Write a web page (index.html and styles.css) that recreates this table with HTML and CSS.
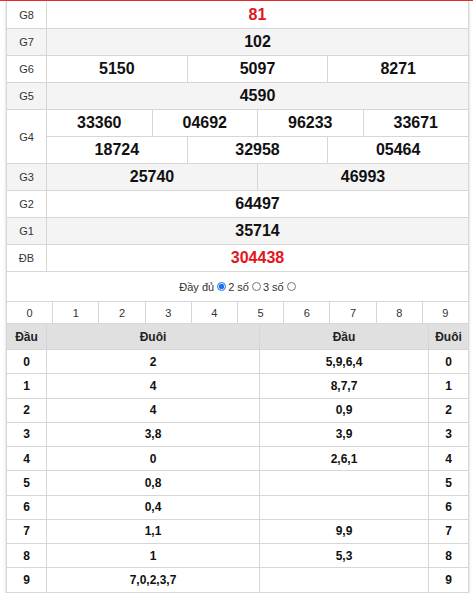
FILE: index.html
```html
<!DOCTYPE html>
<html lang="vi">
<head>
<meta charset="utf-8">
<link rel="stylesheet" href="styles.css">
</head>
<body>
<div class="topline"></div>
<div class="box">
  <div class="row"><div class="lbl">G8</div><div class="vals"><div class="v red">81</div></div></div>
  <div class="row alt"><div class="lbl">G7</div><div class="vals"><div class="v">102</div></div></div>
  <div class="row"><div class="lbl">G6</div><div class="vals"><div class="v">5150</div><div class="v">5097</div><div class="v">8271</div></div></div>
  <div class="row alt"><div class="lbl">G5</div><div class="vals"><div class="v">4590</div></div></div>
  <div class="row g4"><div class="lbl">G4</div>
    <div class="vals stack">
      <div class="sub"><div class="v">33360</div><div class="v">04692</div><div class="v">96233</div><div class="v">33671</div></div>
      <div class="sub"><div class="v">18724</div><div class="v">32958</div><div class="v">05464</div></div>
    </div>
  </div>
  <div class="row alt"><div class="lbl">G3</div><div class="vals"><div class="v">25740</div><div class="v">46993</div></div></div>
  <div class="row"><div class="lbl">G2</div><div class="vals"><div class="v">64497</div></div></div>
  <div class="row alt"><div class="lbl">G1</div><div class="vals"><div class="v">35714</div></div></div>
  <div class="row"><div class="lbl">ĐB</div><div class="vals"><div class="v red">304438</div></div></div>

  <div class="opts">
    <span>Đầy đủ</span><input type="radio" name="m" class="rd" checked><span>2 số</span><input type="radio" name="m" class="rd"><span>3 số</span><input type="radio" name="m" class="rd">
  </div>

  <div class="digits">
    <div class="d">0</div><div class="d">1</div><div class="d">2</div><div class="d">3</div><div class="d">4</div>
    <div class="d">5</div><div class="d">6</div><div class="d">7</div><div class="d">8</div><div class="d">9</div>
  </div>

  <div class="lt head"><div class="c1">Đầu</div><div class="c2">Đuôi</div><div class="c3">Đầu</div><div class="c4">Đuôi</div></div>
  <div class="lt"><div class="c1">0</div><div class="c2">2</div><div class="c3">5,9,6,4</div><div class="c4">0</div></div>
  <div class="lt"><div class="c1">1</div><div class="c2">4</div><div class="c3">8,7,7</div><div class="c4">1</div></div>
  <div class="lt"><div class="c1">2</div><div class="c2">4</div><div class="c3">0,9</div><div class="c4">2</div></div>
  <div class="lt"><div class="c1">3</div><div class="c2">3,8</div><div class="c3">3,9</div><div class="c4">3</div></div>
  <div class="lt"><div class="c1">4</div><div class="c2">0</div><div class="c3">2,6,1</div><div class="c4">4</div></div>
  <div class="lt"><div class="c1">5</div><div class="c2">0,8</div><div class="c3"></div><div class="c4">5</div></div>
  <div class="lt"><div class="c1">6</div><div class="c2">0,4</div><div class="c3"></div><div class="c4">6</div></div>
  <div class="lt"><div class="c1">7</div><div class="c2">1,1</div><div class="c3">9,9</div><div class="c4">7</div></div>
  <div class="lt"><div class="c1">8</div><div class="c2">1</div><div class="c3">5,3</div><div class="c4">8</div></div>
  <div class="lt last"><div class="c1">9</div><div class="c2">7,0,2,3,7</div><div class="c3"></div><div class="c4">9</div></div>
</div>
</body>
</html>
```
FILE: styles.css
```css
* { box-sizing: border-box; }
html, body { margin: 0; padding: 0; background: #fff; }
body { font-family: "Liberation Sans", Arial, sans-serif; color: #111; }

.topline { height: 1px; background: #ee2a2a; }

.box {
  margin-left: 6px;
  width: 463px;
  padding-top: 1px;
  border-left: 1px solid #d6d6d6;
  border-right: 1px solid #d6d6d6;
  box-shadow: 0 1px 3px rgba(0,0,0,0.18);
}

.row {
  display: flex;
  height: 27px;
  border-bottom: 1px solid #d6d6d6;
}
.row.alt { background: #f4f4f4; }
.row.g4 { height: 54px; }

.lbl {
  width: 40px;
  flex: none;
  border-right: 1px solid #d6d6d6;
  display: flex;
  align-items: center;
  justify-content: center;
  font-size: 11px;
  color: #333;
}

.vals { flex: 1; display: flex; }
.vals.stack { flex-direction: column; }
.sub { flex: 1; display: flex; }
.sub + .sub { border-top: 1px solid #d6d6d6; }

.v {
  flex: 1 1 0;
  display: flex;
  align-items: center;
  justify-content: center;
  font-size: 16px;
  font-weight: bold;
  color: #111;
}
.v + .v { border-left: 1px solid #d6d6d6; }
.v.red { color: #e3161e; }

.opts {
  height: 29px;
  display: flex;
  align-items: center;
  justify-content: center;
  font-size: 11px;
  color: #333;
  padding-left: 2px;
}
.rd {
  width: 9px;
  height: 9px;
  margin: 0 2px 0 3px;
  accent-color: #1a73e8;
}

.digits {
  display: flex;
  height: 23px;
  border-top: 1px solid #d6d6d6;
  border-bottom: 1px solid #d6d6d6;
}
.d {
  flex: 1 1 0;
  display: flex;
  align-items: center;
  justify-content: center;
  font-size: 11px;
  color: #333;
}
.d + .d { border-left: 1px solid #d6d6d6; }

.lt {
  display: flex;
  height: 24.27px;
  border-bottom: 1px solid #d6d6d6;
  font-size: 12px;
  font-weight: bold;
  color: #111;
}
.lt.head {
  height: 26px;
  background: #e0e0e0;
  font-size: 12px;
  color: #222;
}
.lt > div {
  display: flex;
  align-items: center;
  justify-content: center;
}
.c1 { width: 40px; border-right: 1px solid #d6d6d6; }
.c2 { width: 213px; border-right: 1px solid #d6d6d6; }
.c3 { width: 169px; border-right: 1px solid #d6d6d6; }
.c4 { width: 39px; }
```
